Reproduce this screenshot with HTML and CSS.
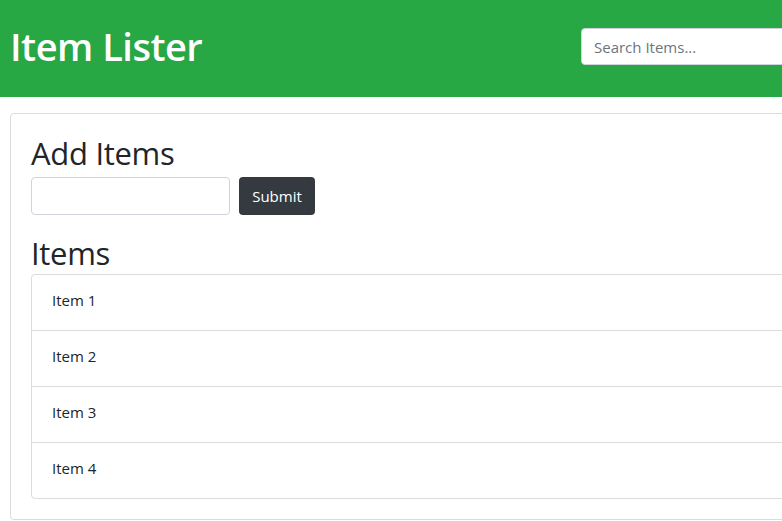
FILE: index.html
```html
<!DOCTYPE html>
<html lang="en">
<head>
<meta charset="utf-8">
<title>Item Lister</title>
<link rel="stylesheet" href="styles.css">
</head>
<body>
<div class="page">
  <header class="header">
    <h1 class="title">Item Lister</h1>
    <div class="search-col">
      <input class="search" type="text" placeholder="Search Items...">
    </div>
  </header>
  <main class="main">
    <section class="card">
      <h2 class="heading">Add Items</h2>
      <form class="add-form">
        <input class="field" type="text">
        <button class="btn" type="button">Submit</button>
      </form>
      <h2 class="heading heading-items">Items</h2>
      <ul class="list">
        <li class="list-item">Item 1</li>
        <li class="list-item">Item 2</li>
        <li class="list-item">Item 3</li>
        <li class="list-item">Item 4</li>
      </ul>
    </section>
  </main>
</div>
</body>
</html>
```
FILE: styles.css
```css
* { box-sizing: border-box; }
html, body { margin: 0; padding: 0; overflow: hidden; background: #fff; }
body {
  font-family: "Open Sans", "Noto Sans", "Liberation Sans", sans-serif;
  color: #212529;
  font-size: 16px;
  line-height: 1.5;
}
.page { width: 1100px; }
.header {
  background: #28a745;
  height: 97px;
  display: grid;
  grid-template-columns: 571px 1fr;
  align-items: center;
  padding-left: 10px;
}
.title {
  margin: 0;
  color: #fff;
  font-size: 38px;
  font-weight: 600;
  line-height: 1.2;
  letter-spacing: -0.5px;
  padding-bottom: 4px;
}
.search-col { padding-bottom: 4px; }
.search {
  width: 100%;
  height: 37px;
  border: 1px solid #ced4da;
  border-radius: 4px;
  padding: 0 12px;
  font-family: inherit;
  font-size: 15px;
  color: #495057;
  background: #fff;
}
.search::placeholder { color: #6c757d; }
.main { padding: 16px 0 0 10px; }
.card {
  border: 1px solid #dcdcdc;
  border-radius: 4px;
  padding: 20px;
  height: 407px;
}
.heading {
  margin: 0;
  font-size: 31px;
  font-weight: 500;
  line-height: 38px;
  letter-spacing: -0.3px;
}
.add-form {
  display: flex;
  gap: 9px;
  margin-top: 5px;
}
.field {
  width: 199px;
  height: 38px;
  border: 1px solid #ced4da;
  border-radius: 4px;
  background: #fff;
}
.btn {
  height: 38px;
  width: 76px;
  border: none;
  border-radius: 4px;
  background: #343a40;
  color: #fff;
  font-family: inherit;
  font-size: 15px;
}
.heading-items { margin-top: 19px; }
.list {
  list-style: none;
  margin: 2px 0 0;
  padding: 0;
  border: 1px solid #dcdcdc;
  border-radius: 4px;
}
.list-item {
  padding: 13px 20px 18px;
  line-height: 24px;
  font-size: 15px;
}
.list-item + .list-item { border-top: 1px solid #dcdcdc; }
```
